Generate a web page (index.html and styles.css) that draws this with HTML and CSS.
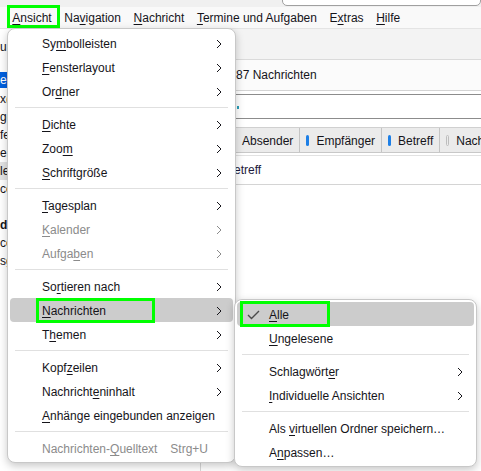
FILE: index.html
```html
<!DOCTYPE html>
<html lang="de">
<head>
    <meta charset="UTF-8">
    <title>Posteingang - Thunderbird</title>
    <link rel="stylesheet" href="styles.css">
</head>
<body>

<div class="titlebar"><div class="search"></div></div>

<nav class="menubar">
    <span class="menubar-item"><u>A</u>nsicht<i class="mark mark-ansicht"></i></span>
    <span class="menubar-item">Na<u>v</u>igation</span>
    <span class="menubar-item"><u>N</u>achricht</span>
    <span class="menubar-item"><u>T</u>ermine und Aufgaben</span>
    <span class="menubar-item">E<u>x</u>tras</span>
    <span class="menubar-item"><u>H</u>ilfe</span>
</nav>

<div class="workspace">
    <aside class="folders">
        <div class="folder-head">unten</div>
        <div class="folder-list">
            <div class="folder selected">eingang</div>
            <div class="folder">x(3)</div>
            <div class="folder">gesendet</div>
            <div class="folder">fehler</div>
            <div class="folder">erledigt</div>
            <div class="folder hover">letzte</div>
            <div class="folder">conto</div>
            <div class="folder"></div>
            <div class="folder bold">daten</div>
            <div class="folder">contacts</div>
            <div class="folder">sgx</div>
        </div>
    </aside>

    <section class="threads">
        <div class="toolbar"></div>
        <div class="count">87 Nachrichten</div>
        <div class="filter"><div class="filter-input"><span class="caret"></span></div></div>
        <div class="columns">
            <div class="col col-first"></div>
            <div class="col"><span class="bar"></span>Absender</div>
            <div class="col"><span class="bar"></span>Empfänger</div>
            <div class="col"><span class="bar"></span>Betreff</div>
            <div class="col"><span class="bar off"></span>Nachrichten</div>
        </div>
        <div class="row">Betreff</div>
    </section>
</div>

<!-- Ansicht menu -->
<div class="menu main-menu">
    <div class="item"><span>Sy<u>m</u>bolleisten</span><svg class="chev" viewBox="0 0 6 10"><path d="M1 1l4 4-4 4"/></svg></div>
    <div class="item"><span><u>F</u>ensterlayout</span><svg class="chev" viewBox="0 0 6 10"><path d="M1 1l4 4-4 4"/></svg></div>
    <div class="item"><span>Or<u>d</u>ner</span><svg class="chev" viewBox="0 0 6 10"><path d="M1 1l4 4-4 4"/></svg></div>
    <div class="sep"></div>
    <div class="item"><span><u>D</u>ichte</span><svg class="chev" viewBox="0 0 6 10"><path d="M1 1l4 4-4 4"/></svg></div>
    <div class="item"><span>Zoo<u>m</u></span><svg class="chev" viewBox="0 0 6 10"><path d="M1 1l4 4-4 4"/></svg></div>
    <div class="item"><span><u>S</u>chriftgröße</span><svg class="chev" viewBox="0 0 6 10"><path d="M1 1l4 4-4 4"/></svg></div>
    <div class="sep"></div>
    <div class="item"><span><u>T</u>agesplan</span><svg class="chev" viewBox="0 0 6 10"><path d="M1 1l4 4-4 4"/></svg></div>
    <div class="item disabled"><span><u>K</u>alender</span><svg class="chev" viewBox="0 0 6 10"><path d="M1 1l4 4-4 4"/></svg></div>
    <div class="item disabled"><span>Aufga<u>b</u>en</span><svg class="chev" viewBox="0 0 6 10"><path d="M1 1l4 4-4 4"/></svg></div>
    <div class="sep"></div>
    <div class="item"><span>So<u>r</u>tieren nach</span><svg class="chev" viewBox="0 0 6 10"><path d="M1 1l4 4-4 4"/></svg></div>
    <div class="item active"><span><u>N</u>achrichten</span><svg class="chev" viewBox="0 0 6 10"><path d="M1 1l4 4-4 4"/></svg><i class="mark mark-nachrichten"></i></div>
    <div class="item"><span>T<u>h</u>emen</span><svg class="chev" viewBox="0 0 6 10"><path d="M1 1l4 4-4 4"/></svg></div>
    <div class="sep"></div>
    <div class="item"><span>Kopf<u>z</u>eilen</span><svg class="chev" viewBox="0 0 6 10"><path d="M1 1l4 4-4 4"/></svg></div>
    <div class="item"><span>Nachricht<u>e</u>ninhalt</span><svg class="chev" viewBox="0 0 6 10"><path d="M1 1l4 4-4 4"/></svg></div>
    <div class="item"><span><u>A</u>nhänge eingebunden anzeigen</span></div>
    <div class="sep"></div>
    <div class="item disabled"><span>Nachrichten-<u>Q</u>uelltext</span><span class="key">Strg+U</span></div>
</div>

<!-- Nachrichten submenu -->
<div class="menu sub-menu">
    <div class="item active"><svg class="check" viewBox="0 0 13 10"><path d="M1 5l3.5 3.5L12 1"/></svg><span><u>A</u>lle</span><i class="mark mark-alle"></i></div>
    <div class="item"><span><u>U</u>ngelesene</span></div>
    <div class="sep"></div>
    <div class="item"><span>Schlagwört<u>e</u>r</span><svg class="chev" viewBox="0 0 6 10"><path d="M1 1l4 4-4 4"/></svg></div>
    <div class="item"><span><u>I</u>ndividuelle Ansichten</span><svg class="chev" viewBox="0 0 6 10"><path d="M1 1l4 4-4 4"/></svg></div>
    <div class="sep"></div>
    <div class="item"><span>Als <u>v</u>irtuellen Ordner speichern…</span></div>
    <div class="item"><span>A<u>n</u>passen…</span></div>
</div>

</body>
</html>
```

FILE: styles.css
```css
body {
    margin: 0;
    width: 481px;
    height: 471px;
    overflow: hidden;
    position: relative;
    font-family: "Liberation Sans", Arial, sans-serif;
    font-size: 12px;
    color: #15141a;
    background-color: #fff;
}

u {
    text-underline-offset: 2px;
}

/* window top */
.titlebar {
    height: 7px;
    background-color: #f0f0f0;
    overflow: hidden;
}

.titlebar .search {
    margin: -16px 0 0 282px;
    height: 20px;
    border: 1px solid #a0a0a0;
    border-radius: 5px;
    background-color: #fff;
}

.menubar {
    position: relative;
    z-index: 2;
    display: flex;
    height: 21px;
    padding-left: 6px;
    background-color: #f9f9f9;
    box-shadow: 0 1px 0 #e4e4e4;
}

.menubar-item {
    position: relative;
    box-sizing: border-box;
    height: 21px;
    padding: 1px 6.3px 0;
    line-height: 21px;
}

/* folder pane + thread pane */
.workspace {
    display: flex;
    height: 443px;
}

.folders {
    width: 200px;
    background-color: #fff;
    border-right: 1px solid #d8d8d8;
}

.folder-head {
    height: 18px;
    line-height: 18px;
    margin-top: 10px;
}

.folder-list {
    margin-top: 16px;
}

.folder {
    height: 18px;
    line-height: 18px;
}

.folder.selected {
    background-color: #0060df;
    color: #fff;
    height: 16px;
    line-height: 16px;
    margin-bottom: 2px;
}

.folder.hover {
    background-color: #e3e3e3;
}

.folder.bold {
    font-weight: bold;
}

.threads {
    flex: 1;
    display: flex;
    flex-direction: column;
    min-width: 0;
}

.toolbar {
    height: 31px;
    background-color: #f3f3f3;
    border-bottom: 1px solid #dadada;
}

.count {
    height: 30px;
    line-height: 31px;
    padding-left: 35px;
    background-color: #fbfbfb;
    border-bottom: 1px solid #d4d4d4;
}

.filter {
    padding-top: 3px;
    background-color: #fff;
}

.filter-input {
    height: 23px;
    margin-right: -10px;
    border: 1px solid #8c8c8c;
    border-radius: 4px;
    position: relative;
}

.caret {
    position: absolute;
    left: 35px;
    top: 11px;
    width: 2px;
    height: 3px;
    background-color: #2a9fb8;
}

.columns {
    display: flex;
    height: 24px;
    margin-top: 8px;
    border-top: 1px solid #d0d0d0;
    border-bottom: 1px solid #c8c8c8;
    background-color: #ebebeb;
    white-space: nowrap;
    overflow: hidden;
}

.col {
    flex-shrink: 0;
    display: flex;
    align-items: center;
    padding: 1px 6px 0;
    border-left: 1px solid #c4c4c4;
}

.col-first {
    width: 12px;
    border-left: none;
}

.bar {
    width: 3px;
    height: 11px;
    margin-right: 7px;
    border-radius: 2px;
    background-color: #1d7fe6;
}

.bar.off {
    box-sizing: border-box;
    background-color: transparent;
    border: 1px solid #bdbdbd;
}

.row {
    height: 28px;
    line-height: 28px;
    margin-top: 2px;
    padding-left: 25px;
    color: #1e1a3c;
    border-top: 1px solid #e2e2e2;
    border-bottom: 1px solid #d4d4d4;
}

/* popup menus */
.menu {
    position: absolute;
    z-index: 5;
    padding: 2px;
    background-color: #fff;
    border: 1px solid #c8c8c8;
    border-radius: 8px;
    box-shadow: 0 3px 8px rgba(0, 0, 0, 0.22);
}

.main-menu {
    left: 7px;
    top: 28px;
    width: 223px;
}

.sub-menu {
    z-index: 6;
    left: 234px;
    top: 299px;
    width: 237px;
}

.item {
    position: relative;
    box-sizing: border-box;
    display: flex;
    align-items: center;
    height: 24px;
    padding: 2px 11px 0 32px;
    border-radius: 4px;
    white-space: nowrap;
}

.item.active {
    background-color: #cccccc;
}

.item.disabled {
    color: #8b8b8b;
}

.chev {
    width: 6px;
    height: 10px;
    margin-left: auto;
    fill: none;
    stroke: currentColor;
    stroke-width: 1;
}

.check {
    width: 13px;
    height: 10px;
    margin-left: -22px;
    margin-right: 9px;
    fill: none;
    stroke: #4a4a4a;
    stroke-width: 1.4;
}

.key {
    margin-left: auto;
    padding-right: 14px;
}

.sep {
    height: 1px;
    margin: 4px 5px;
    background-color: #e0e0e0;
}

/* green highlight boxes */
.mark {
    position: absolute;
    box-sizing: border-box;
    border: 3px solid #00ff00;
}

.mark-ansicht {
    left: 1px;
    top: -2px;
    width: 53px;
    height: 23px;
}

.mark-nachrichten {
    left: 26px;
    top: 0;
    width: 119px;
    height: 25px;
}

.mark-alle {
    left: 3px;
    top: -1px;
    width: 90px;
    height: 26px;
}
```
